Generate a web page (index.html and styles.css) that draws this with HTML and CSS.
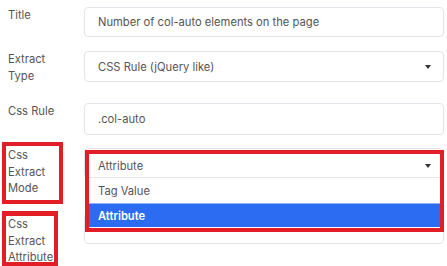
FILE: index.html
```html
<!DOCTYPE html>
<html>
<head>
<meta charset="utf-8">
<link rel="stylesheet" href="styles.css">
</head>
<body>
<div class="form">
  <div class="row r1">
    <div class="label">Title</div>
    <div class="field"><div class="input h30">Number of col-auto elements on the page</div></div>
  </div>
  <div class="row r2">
    <div class="label">Extract<br>Type</div>
    <div class="field"><div class="input h31 select">CSS Rule (jQuery like)<span class="caret"></span></div></div>
  </div>
  <div class="row r3">
    <div class="label">Css Rule</div>
    <div class="field"><div class="input h32">.col-auto</div></div>
  </div>
  <div class="row r4">
    <div class="label"><div class="mark m1">Css<br>Extract<br>Mode</div></div>
    <div class="field rel">
      <div class="input h30 select"></div>
      <div class="dropdown">
        <div class="dd-head">Attribute<span class="caret"></span></div>
        <div class="dd-item">Tag Value</div>
        <div class="dd-item active">Attribute</div>
      </div>
    </div>
  </div>
  <div class="row r5">
    <div class="label"><div class="mark m2">Css<br>Extract<br>Attribute</div></div>
    <div class="field"><div class="input h31 low"></div></div>
  </div>
</div>
</body>
</html>
```
FILE: styles.css
```css
html, body {
  margin: 0;
  padding: 0;
  background: #ffffff;
  overflow: hidden;
}
body {
  font-family: Inter, "Noto Sans", sans-serif;
  font-size: 11.2px;
  color: #555555;
}
.form {
  padding-top: 7px;
}
.row {
  display: flex;
  align-items: flex-start;
}
.r1 { margin-bottom: 14px; }
.r2 { margin-bottom: 19px; }
.r3 { margin-bottom: 13px; }
.r4 { margin-bottom: 7px; }
.label {
  width: 84px;
  flex: none;
  box-sizing: border-box;
  padding-left: 8px;
  line-height: 16.5px;
}
.field {
  flex: 1;
  margin-right: 3px;
}
.rel { position: relative; }
.input {
  box-sizing: border-box;
  border: 1px solid #e1e4e8;
  border-radius: 4px;
  padding-left: 13px;
  padding-right: 12px;
  display: flex;
  align-items: center;
  background: #fff;
}
.h30 { height: 30px; }
.h31 { height: 31px; }
.h32 { height: 32px; }
.low { margin-top: 2px; }
.select {
  justify-content: space-between;
}
.caret {
  width: 0;
  height: 0;
  border-left: 3.5px solid transparent;
  border-right: 3.5px solid transparent;
  border-top: 4px solid #333;
}
.mark {
  box-sizing: border-box;
  border: 4px solid #e31d25;
  margin-left: -6px;
  padding-left: 2px;
}
.m1 {
  width: 61px;
  height: 62px;
  margin-top: -6px;
  padding-top: 1px;
}
.m2 {
  width: 56px;
  height: 56px;
  border-width: 5px 4px 5px 4px;
  margin-left: -6px;
  padding-top: 0;
  line-height: 16.5px;
}
.dropdown {
  position: absolute;
  left: 1px;
  right: 0;
  top: 2px;
  height: 82px;
  box-sizing: border-box;
  border: 4px solid #e31d25;
  background: #fff;
}
.dd-head {
  height: 24px;
  box-sizing: border-box;
  border-bottom: 1px solid #e4e6e9;
  display: flex;
  align-items: center;
  justify-content: space-between;
  padding-left: 9px;
  padding-right: 9px;
}
.dd-item {
  height: 25px;
  display: flex;
  align-items: center;
  padding-left: 9px;
}
.dd-item.active {
  height: 24px;
  background: #2b6cf2;
  color: #ffffff;
  font-weight: 600;
  border-top: 1px solid #8fb0f5;
  box-sizing: border-box;
}
```
